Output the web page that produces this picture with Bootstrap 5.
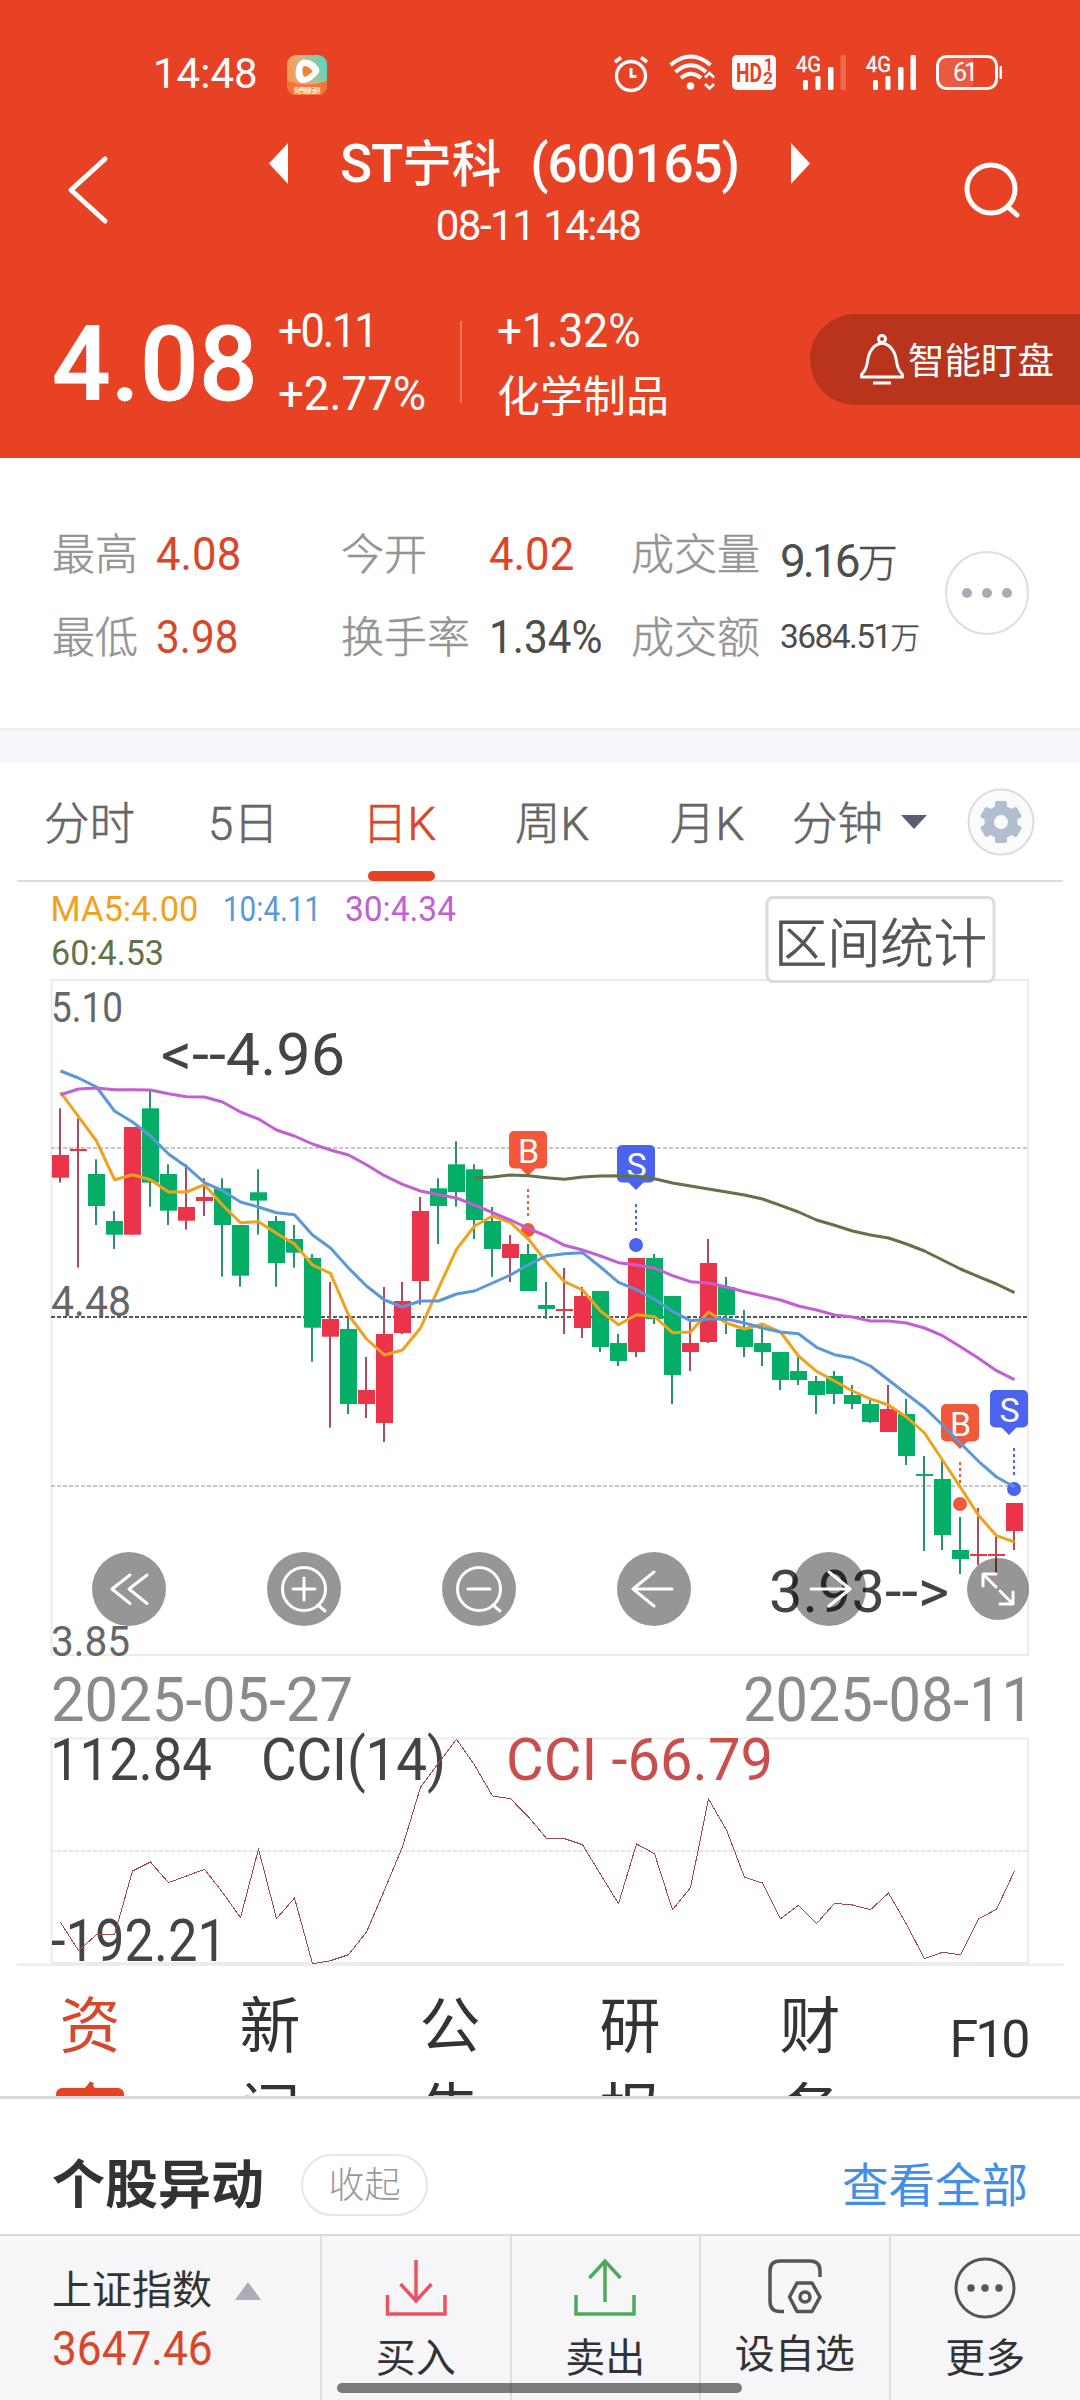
<!DOCTYPE html>
<html lang="zh-CN">
<head>
<meta charset="utf-8">
<meta name="viewport" content="width=device-width, initial-scale=1">
<title>ST宁科 (600165)</title>
<link href="https://cdn.jsdelivr.net/npm/bootstrap@5.3.0/dist/css/bootstrap.min.css" rel="stylesheet">
<style>
:root{--brand:#e84224;--up:#d9472a}
body{width:1080px;margin:0;background:#fff;font-family:Roboto,"Noto Sans CJK SC",sans-serif;color:#333;line-height:1;overflow-x:hidden}
svg{display:block;flex:none}
svg text{font-family:Roboto,"Noto Sans CJK SC",sans-serif}
.phone{height:2400px;overflow:hidden}
.nw{white-space:nowrap}
.cond{display:inline-block;transform-origin:left center}
.c90{transform:scaleX(.9);letter-spacing:-2.3px}
.c96{transform:scaleX(.95)}
.c94{transform:scaleX(.92)}
.head{height:458px;background:var(--brand);color:#fff}
.status{height:120px;padding:40px 60px 10px 153px}
.clock{font-size:42px;width:134px;padding-bottom:3px}
.navrow{height:140px;padding:0 59px 0 67px}
.title-line{height:64px;gap:51px;margin:12px 0 0 7px}
.stock{font-size:49.5px;font-weight:500}
.stock .latin{font-size:53px;letter-spacing:-1.1px}
.stock .code{margin-left:29px}
.stamp{height:60px;font-size:42px;letter-spacing:-1.5px;padding-left:4px}
.pricerow{height:126px;margin-top:39px;padding-left:52px}
.price{font-size:103px;font-weight:500;width:226px;letter-spacing:.4px;padding-top:5px;-webkit-text-stroke:.8px #fff}
.line2{height:63px;font-size:48px;display:flex;align-items:center}
.line2.cjk{font-size:43px;padding-top:7px}
.chg{width:182px}
.rule{width:2px;height:82px;background:#ee7862}
.ind{margin-left:35px;flex:1}
.watch{width:270px;height:91px;background:#b9341d;border-radius:46px 0 0 46px;padding-left:49px;font-size:36.5px;margin-bottom:5px}
.watch span{padding:5px 0 0 1px}
.stats{height:270px;padding:54px 0 0 52px;display:grid;grid-template-columns:104px 185px 148px 142px 149px 165px 1fr;grid-template-rows:83px 83px;align-items:center;font-size:43px;color:#4d4d4d}
.stats .lb{color:#949494;font-weight:300;padding-top:4px;-webkit-text-stroke:.5px currentColor}
.stats .num{font-size:46px}
.stats .red{color:var(--up)}
.stats .vol{padding-top:15px}
.stats .vol .num{letter-spacing:-3px}
.stats .vol small{font-size:40px;font-weight:300;-webkit-text-stroke:.5px currentColor}
.stats .amt{font-size:33.5px;letter-spacing:-1.6px}
.stats .amt small{font-size:29.5px;font-weight:300;-webkit-text-stroke:.4px currentColor}
.morebtn{grid-column:7;grid-row:1/3;width:84px;height:84px;border:2px solid #dedede;border-radius:50%;gap:10px;margin-top:-5px}
.morebtn i{width:10px;height:10px;border-radius:50%;background:#a9acb6}
.band{height:35px;background:#f5f5fa;border-top:2px solid #ececf0}
.ktabs{height:119px;margin:0 17px;border-bottom:2px solid #dcdcdc;padding-left:27px;display:grid;grid-template-columns:164px 160px 147px 155px 122px 109px 66px 1fr;font-size:45.5px;color:#666;font-weight:300;-webkit-text-stroke:.6px currentColor}
.ktabs>div{height:118px;display:flex;align-items:center}
.ktabs>.tx{padding-top:6px}
.ktabs .on{color:var(--up);position:relative;text-indent:-6px}
.ktabs .on::after{content:"";position:absolute;left:0;bottom:0;width:67px;height:10px;border-radius:5px;background:var(--brand)}
.subtabs{height:133px;overflow:hidden;display:grid;grid-template-columns:repeat(6,180px);font-size:61px;line-height:86px;padding-top:18px;border-bottom:3px solid #dadada;text-align:center}
.subtabs div{width:62px;margin:0 auto;word-break:break-all;height:200px;position:relative}
.subtabs .on{color:var(--up)}
.subtabs .on::after{content:"";position:absolute;left:-3px;top:104px;width:68px;height:14px;border-radius:6px;background:var(--brand)}
.subtabs .f10{width:auto;font-size:52px;letter-spacing:-3px;padding:13px 3px 0 0}
.moves{height:135px;padding:36px 52px 0}
.moves h2{font-size:53px;font-weight:700;margin:0;line-height:1;padding-top:4px}
.fold{border:2px solid #e6e6e6;border-radius:31px;width:127px;height:62px;font-size:36px;color:#999;font-weight:300;margin-left:37px}
.fold span{padding-top:3px}
.all{font-size:46.5px;color:#428ee8;padding-top:4px}
.dock{height:166px;background:#f6f6f8;border-top:2px solid #dadbe0;position:relative;font-size:40px}
.idx{width:322px;padding:35px 0 0 52px;border-right:2px solid #e0e0e4}
.idxval{font-size:48px;color:var(--up);margin-top:14px}
.act{width:189.5px;border-right:2px solid #dededf;padding-top:20px}
.act.last{border:0}
.act svg{margin-bottom:19px}
.homebar{position:absolute;left:337px;top:147px;width:405px;height:10px;border-radius:5px;background:rgba(0,0,0,.5)}
</style>
</head>
<body>
<div class="phone d-flex flex-column">
<header class="head">
  <div class="status d-flex align-items-center">
    <span class="clock nw">14:48</span>
    <svg width="40" height="40" viewBox="0 0 40 40"><defs><linearGradient id="ag" x1="0" y1=".6" x2="1" y2=".3"><stop offset="0" stop-color="#f3974c"/><stop offset=".45" stop-color="#dcb183"/><stop offset="1" stop-color="#58d8bd"/></linearGradient><clipPath id="ac"><rect width="40" height="40" rx="9"/></clipPath></defs><g clip-path="url(#ac)"><rect width="40" height="40" fill="url(#ag)"/><path d="M0 26Q20 33 40 26V40H0Z" fill="#f5743a"/></g><path d="M15.500 4.500Q9 8 8.500 17T15 28Q21 28 28 22T31 12Q26 4 15.500 4.500Z" fill="#fff"/><path d="M16.500 11Q14 16 17 22Q23 20 25.500 16Q22 11 16.500 11Z" fill="#f0843f"/><text x="6.500" y="37.500" font-size="7" font-weight="700" fill="#ffe9c8" textLength="27">免费看短剧</text></svg>
    <svg class="ms-auto" width="420" height="70" viewBox="0 0 420 70" fill="none" stroke="#fff">
      <circle cx="31" cy="36" r="14.500" stroke-width="3.300"/><path d="M31 28V36.500H36.500" stroke-width="3"/><path d="M15 22L21 17.500M47 22L41 17.500" stroke-width="3.500"/>
      <path d="M70.500 25Q91 8 110.500 25M75.500 32Q91 18.500 106 32M81 38Q91 29.500 101 38" stroke-width="4"/><circle cx="90.500" cy="46" r="3.800" fill="#fff" stroke="none"/><path d="M105 37.500L109.500 33 114 37.500M105 44L109.500 48.500 114 44" stroke-width="2.600"/>
      <rect x="132" y="15" width="44" height="35" rx="5" fill="#fff" stroke="none"/>
      <g fill="#e84224" stroke="none" font-weight="700"><text x="136" y="42" font-size="26" textLength="26" lengthAdjust="spacingAndGlyphs">HD</text><text x="164" y="31" font-size="18" textLength="9" lengthAdjust="spacingAndGlyphs">1</text><text x="163" y="44" font-size="16" textLength="10" lengthAdjust="spacingAndGlyphs">2</text></g>
      <g fill="#fff" stroke="none" font-size="22"><text x="196" y="31.500" textLength="25" lengthAdjust="spacingAndGlyphs" stroke="#fff" stroke-width=".4">4G</text><text x="266" y="31.500" textLength="25" lengthAdjust="spacingAndGlyphs" stroke="#fff" stroke-width=".4">4G</text>
      <rect x="203" y="40" width="5" height="10" rx="1.500"/><rect x="215.500" y="36" width="5" height="14" rx="1.500"/><rect x="228" y="27" width="5.500" height="23" rx="1.500"/><rect x="240.500" y="15" width="5.500" height="35" rx="1.500" opacity=".22"/>
      <rect x="273" y="40" width="5" height="10" rx="1.500"/><rect x="285.500" y="36" width="5" height="14" rx="1.500"/><rect x="298" y="27" width="5.500" height="23" rx="1.500"/><rect x="310.500" y="15" width="5.500" height="35" rx="1.500"/>
      <rect x="338" y="17" width="36" height="31" rx="6" opacity=".13"/><rect x="399.500" y="26" width="2.500" height="13" rx="1"/></g>
      <rect x="337.500" y="16.500" width="59" height="32" rx="9" stroke-width="3"/><text x="353" y="41" font-size="25" fill="#fff" stroke="none" textLength="25">61</text>
    </svg>
  </div>
  <div class="navrow d-flex align-items-center justify-content-between">
    <svg width="42" height="70" viewBox="0 0 42 70" fill="none" stroke="#fff" stroke-width="5" stroke-linecap="round" stroke-linejoin="round"><path d="M38 4L4 35 38 66"/></svg>
    <div class="align-self-start d-flex flex-column align-items-center">
      <div class="title-line d-flex align-items-center">
        <svg width="20" height="42"><path d="M19 0V41L0 20.500Z" fill="#fff"/></svg>
        <div class="stock nw"><span class="latin">ST</span>宁科<span class="latin code">(600165)</span></div>
        <svg width="20" height="42"><path d="M1 0V41L20 20.500Z" fill="#fff"/></svg>
      </div>
      <div class="stamp d-flex align-items-center nw">08-11 14:48</div>
    </div>
    <svg width="58" height="58" viewBox="0 0 58 58" fill="none" stroke="#fff" stroke-width="5" stroke-linecap="round"><circle cx="28" cy="28" r="24"/><path d="M45 46L54 54"/></svg>
  </div>
  <div class="pricerow d-flex align-items-center">
    <div class="price">4.08</div>
    <div class="chg"><div class="line2"><span class="cond c90">+0.11</span></div><div class="line2"><span class="cond c96">+2.77%</span></div></div>
    <div class="rule"></div>
    <div class="ind"><div class="line2"><span class="cond c94">+1.32%</span></div><div class="line2 cjk">化学制品</div></div>
    <div class="watch d-flex align-items-center nw">
      <svg width="48" height="52" viewBox="0 0 48 52" fill="none" stroke="#fff" stroke-width="3" stroke-linejoin="round"><circle cx="23" cy="5" r="3.500"/><path d="M23 9C11 11 9 23 8 30Q7 36 2.500 40.500V43H43.500V40.500Q39 36 38 30C37 23 35 11 23 9Z"/><path d="M14 49H32"/></svg>
      <span>智能盯盘</span>
    </div>
  </div>
</header>
<section class="stats nw">
  <div class="lb">最高</div><div class="num red"><span class="cond c96">4.08</span></div><div class="lb">今开</div><div class="num red"><span class="cond c96">4.02</span></div><div class="lb">成交量</div><div class="vol"><span class="num">9.16</span><small>万</small></div>
  <div class="lb">最低</div><div class="num red"><span class="cond c94">3.98</span></div><div class="lb">换手率</div><div class="num"><span class="cond c94">1.34%</span></div><div class="lb">成交额</div><div class="amt">3684.51<small>万</small></div>
  <div class="morebtn d-flex align-items-center justify-content-center"><i></i><i></i><i></i></div>
</section>
<div class="band flex-shrink-0"></div>
<nav class="ktabs nw flex-shrink-0">
  <div class="tx">分时</div><div class="tx">5日</div><div class="tx on">日K</div><div class="tx">周K</div><div class="tx">月K</div><div class="tx">分钟</div>
  <div><svg width="26" height="14"><path d="M0 0H26L13 14Z" fill="#595e72"/></svg></div>
  <div><svg width="68" height="68" viewBox="-34 -34 68 68"><circle r="32.500" fill="#fbfbfc" stroke="#dcdcdf" stroke-width="2"/><g fill="#afbfd0"><rect x="-6" y="-21" width="12" height="42" rx="2"/><rect x="-6" y="-21" width="12" height="42" rx="2" transform="rotate(60)"/><rect x="-6" y="-21" width="12" height="42" rx="2" transform="rotate(120)"/><circle r="16.500"/></g><circle r="7" fill="#fbfbfc"/></svg></div>
</nav>
<svg id="chart" width="1080" height="1084" viewBox="0 882 1080 1084"></svg>
<nav class="subtabs flex-shrink-0"><div class="on">资金</div><div>新闻</div><div>公告</div><div>研报</div><div>财务</div><div class="f10">F10</div></nav>
<section class="moves d-flex align-items-center nw flex-shrink-0">
  <h2>个股异动</h2><button class="fold btn p-0 d-flex align-items-center justify-content-center"><span>收起</span></button><span class="all ms-auto">查看全部</span>
</section>
<footer class="dock d-flex nw flex-shrink-0">
  <div class="idx"><div class="d-flex align-items-center"><span>上证指数</span><svg width="26" height="18" style="margin-left:23px"><path d="M0 18H26L13 0Z" fill="#aaadb3"/></svg></div><div class="idxval"><span class="cond c94">3647.46</span></div></div>
  <div class="act d-flex flex-column align-items-center"><svg width="64" height="64" viewBox="384 2256 64 64" fill="none" stroke="#ee5262" stroke-width="3.500"><path d="M416 2260V2301M400.500 2284L416 2301 431.500 2284M387.500 2295V2314H445V2295"/></svg>买入</div>
  <div class="act d-flex flex-column align-items-center"><svg width="64" height="64" viewBox="573 2256 64 64" fill="none" stroke="#4ea958" stroke-width="3.500"><path d="M605 2302V2261M589.500 2278L605 2261 620.500 2278M576 2295V2314H634V2295"/></svg>卖出</div>
  <div class="act d-flex flex-column align-items-center"><svg width="64" height="60" viewBox="764 2256 64 60" fill="none" stroke="#555" stroke-width="3.500" stroke-linejoin="round"><path d="M821 2277V2271Q821 2261 811 2261H781Q771 2261 771 2271V2301Q771 2311.500 781 2311.500H785M798 2283H813L821 2297 813 2311.500H798L790.500 2297Z"/><circle cx="806" cy="2297" r="5"/></svg>设自选</div>
  <div class="act last d-flex flex-column align-items-center"><svg width="64" height="64" viewBox="-32 -32 64 64"><circle r="29" fill="none" stroke="#555" stroke-width="3"/><g fill="#555"><circle cx="-14" r="3.700"/><circle r="3.700"/><circle cx="14" r="3.700"/></g></svg>更多</div>
  <div class="homebar"></div>
</footer>
</div>
<script src="https://cdn.jsdelivr.net/npm/bootstrap@5.3.0/dist/js/bootstrap.bundle.min.js"></script>
<script>
// Candles: direction, wick top, wick bottom, body top, body bottom (thirds of a pixel below y=880)
const candles = `R 685 908 825 893|R 715 1163 807 813|G 838 1035 882 978|G 993 1107 1023 1064|R 741 1064 741 1064|G 630 980 685 908|G 853 1035 882 992|R 853 1049 981 1022|R 895 1008 951 963|G 895 1190 925 1035|G 1035 1220 1035 1187|G 868 1064 937 962|G 1008 1220 1023 1149|G 1035 1163 1077 1118|G 1122 1445 1134 1343|R 1206 1643 1317 1370|G 1312 1602 1347 1572|R 1431 1614 1530 1572|R 1221 1686 1362 1629|R 1206 1362 1263 1359|R 951 1274 993 1203|G 895 1092 925 978|G 784 980 853 936|G 853 1077 868 1020|G 981 1190 1023 1107|R 1065 1206 1092 1134|G 1092 1233 1122 1233|G 1206 1317 1275 1287|R 1164 1362 1287 1293|R 1221 1374 1248 1344|G 1233 1416 1233 1401|G 1362 1458 1389 1443|R 1134 1431 1134 1416|G 1122 1332 1134 1317|G 1248 1572 1248 1485|R 1326 1473 1389 1416|R 1077 1389 1149 1386|G 1191 1362 1221 1305|G 1290 1431 1347 1401|G 1335 1458 1389 1416|G 1416 1530 1416 1500|G 1431 1515 1473 1500|G 1488 1602 1503 1545|G 1473 1572 1488 1542|G 1515 1587 1545 1572|G 1560 1629 1572 1626|R 1515 1656 1587 1656|G 1557 1755 1602 1728|G 1728 2013 1782 1788|G 1740 2010 1797 1965|G 1911 2082 2010 2037|R 1884 2055 2022 2028|R 1970 2082 2022 2028|R 1869 2010 1869 1953`.split('|').map(s => s.split(' '));
const ma5 = [637,710,783,899,884,899,936,936,914,975,1028,1025,1060,1092,1155,1180,1305,1377,1425,1410,1344,1225,1108,1038,1008,1028,1078,1146,1205,1230,1293,1334,1304,1310,1358,1356,1296,1329,1347,1332,1356,1428,1474,1503,1533,1557,1575,1611,1659,1740,1822,1906,1967,1986];
const ma10 = [573,594,621,693,726,768,822,860,908,932,966,981,998,1004,1065,1104,1164,1218,1260,1281,1263,1263,1242,1233,1209,1185,1154,1128,1121,1118,1161,1207,1229,1258,1294,1322,1317,1317,1329,1344,1356,1361,1402,1424,1434,1458,1500,1542,1583,1635,1690,1744,1791,1821];
const ma30 = [644,627,624,629,629,630,641,650,651,666,696,717,750,768,792,810,825,854,887,913,933,944,954,975,998,1020,1046,1068,1096,1110,1128,1148,1155,1164,1187,1205,1209,1221,1235,1247,1260,1278,1290,1305,1311,1323,1323,1329,1344,1367,1400,1435,1472,1499];
const ma60 = [894,891,885,887,893,898,891,888,887,888,896,909,918,927,936,945,957,976,996,1020,1036,1053,1065,1074,1092,1113,1140,1167,1190,1212,1238];
const cci = [787,872,824,824,633,606,668,648,628,697,773,567,776,714,911,902,884,816,690,560,382,310,238,315,408,416,471,535,536,554,643,731,552,581,749,683,417,510,652,669,776,736,791,730,735,749,699,793,896,877,884,777,748,633];
const r1 = n => Math.round(n * 10) / 10;
const X = i => 60.5 + 18 * i, Y = v => r1(880 + v / 3);
const line = (a, col, w, s = 0, base = 880, extra = '') => `<polyline fill="none" stroke="${col}" stroke-width="${w}" stroke-linejoin="round" ${extra} points="${a.map((v, i) => X(i + s) + ',' + r1(base + v / 3)).join(' ')}"/>`;
const T = (x, y, w, size, col, s, o = '') => `<text x="${x}" y="${y}" font-size="${size}" fill="${col}" textLength="${w}" lengthAdjust="spacingAndGlyphs" ${o}>${s}</text>`;
const pin = (bx, y, dotX, d1, d2, dotY, col, letter) => `<rect x="${bx}" y="${y}" width="38" height="37.500" rx="5" fill="${col}"/><path d="M${bx + 11} ${y + 37}h16l-8 8z" fill="${col}"/><text x="${bx + 19.5}" y="${y + 31.5}" font-size="34" fill="#fff" text-anchor="middle">${letter}</text><path d="M${dotX} ${d1}V${d2}" stroke="${col}" stroke-width="2" stroke-dasharray="3 3"/><circle cx="${dotX}" cy="${dotY}" r="7" fill="${col}"/>`;
let h = '';
h += T(50.5, 921, 148, 35, '#f0a21c', 'MA5:4.00') + T(223, 921, 98, 35, '#5a98d8', '10:4.11') + T(345, 921, 111, 35, '#c15fd3', '30:4.34') + T(51, 965, 113, 35, '#5f7347', '60:4.53');
h += '<path d="M51.500 1655V980H1028V1655Z" fill="none" stroke="#ebebeb" stroke-width="2"/>';
h += '<g stroke="#c6c6c6" stroke-width="2" stroke-dasharray="4 2"><path d="M51 1148H1028M51 1486H1028"/><path d="M51 1317H1028" stroke="#555"/></g>';
candles.forEach(([d, a, b, c, e], i) => {
  const up = d === 'R';
  h += `<rect x="${59 + 18 * i}" y="${Y(+a)}" width="2" height="${r1((b - a) / 3)}" fill="${up ? '#ae4a5b' : '#27926b'}"/><rect x="${52 + 18 * i}" y="${Y(+c)}" width="17" height="${r1((e - c) / 3)}" fill="${up ? '#eb3349' : '#04ae66'}"/>`;
});
const R = '#f2583a', B = '#4b64f0';
h += pin(509, 1131, 528, 1189, 1217, 1230, R, 'B') + pin(617, 1145, 636, 1204, 1232, 1245, B, 'S') + pin(941, 1404, 960, 1462, 1484, 1504, R, 'B') + pin(990, 1390, 1014, 1448, 1476, 1489, B, 'S');
h += line(ma5, '#f0a21c', 3) + line(ma10, '#5a98d8', 3) + line(ma30, '#c15fd3', 3) + line(ma60, '#5f7347', 3, 23);
h += T(51, 1021.5, 72, 42, '#666', '5.10') + T(51, 1315.5, 80, 42, '#666', '4.48') + T(51, 1655.5, 79, 42, '#666', '3.85');
h += T(161, 1075, 184, 59, '#444', '&lt;--4.96') + T(769, 1612, 180, 59, '#444', '3.93--&gt;');
h += '<rect x="767" y="897.500" width="227" height="84" rx="6" fill="#fff" stroke="#dcdcdc" stroke-width="3"/>' + T(774, 962.5, 213, 53, '#555', '区间统计', 'font-weight="300" stroke="#555" stroke-width=".8"');
h += '<g fill="#000" fill-opacity=".41">' + [129, 304, 479, 654, 829].map(x => `<circle cx="${x}" cy="1589" r="37"/>`).join('') + '<circle cx="998" cy="1589" r="31"/></g>';
h += '<g fill="none" stroke="#fff" stroke-width="3" stroke-linecap="round" stroke-linejoin="round"><path d="M130 1575L112 1589 130 1603.500M147 1575L129 1589 147 1603.500"/><circle cx="304" cy="1589" r="21.500"/><path d="M318 1605L325 1611M293 1589H315M304 1578V1600"/><circle cx="479" cy="1589" r="21.500"/><path d="M493 1605L500 1611M468 1589H490"/><path d="M672 1589H633M654 1572L633 1589 654 1606M811 1589H850M829 1572L850 1589 829 1606"/><path d="M996 1587L983 1574M983 1586V1574H996M1000 1591L1013 1604M1013 1592V1604H1000"/></g>';
h += T(51, 1721, 302, 61, '#8a8a8a', '2025-05-27') + T(743, 1721, 291, 61, '#8a8a8a', '2025-08-11');
h += '<path d="M51.500 1963V1738.500H1028V1963Z" fill="none" stroke="#ebebeb" stroke-width="2"/><path d="M51 1851H1028" stroke="#e6e6e6" stroke-width="2" stroke-dasharray="4 2"/><path d="M17 1965.500H1063" stroke="#ededed" stroke-width="4"/>';
h += T(50, 1780, 162, 59, '#444', '112.84') + T(261, 1780, 185, 59, '#444', 'CCI(14)') + T(506, 1780, 267, 59, '#c94f4f', 'CCI -66.79') + T(51, 1961, 176, 59, '#444', '-192.21');
h += line(cci, '#964b50', 1, 0, 1660, 'shape-rendering="crispEdges"');
document.getElementById('chart').innerHTML = h;
</script>
</body>
</html>
